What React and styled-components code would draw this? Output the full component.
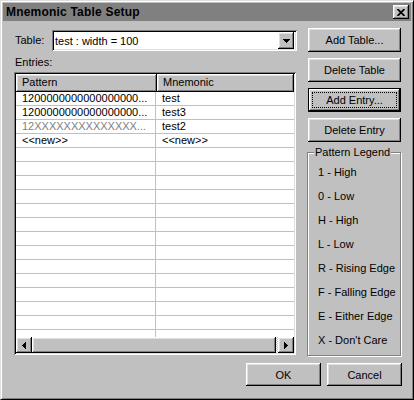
import React from "react";
import styled, { createGlobalStyle, css } from "styled-components";

const GlobalStyle = createGlobalStyle`
  html, body {
    margin: 0;
    padding: 0;
    background: #c0c0c0;
  }
  body {
    font-family: "Liberation Sans", Arial, sans-serif;
    font-size: 11px;
    color: #000;
  }
`;

const raised = css`
  box-shadow: inset -1px -1px #000, inset 1px 1px #fff, inset -2px -2px #808080,
    inset 2px 2px #dfdfdf;
`;

const sunken = css`
  box-shadow: inset 1px 1px #808080, inset -1px -1px #fff, inset 2px 2px #000,
    inset -2px -2px #dfdfdf;
`;

const Window = styled.div`
  box-sizing: border-box;
  width: 414px;
  height: 400px;
  background: #c0c0c0;
  border: 1px solid;
  border-color: #dfdfdf #000 #000 #dfdfdf;
  box-shadow: inset 1px 1px #fff, inset -1px -1px #808080;
  padding: 2px;
  display: flex;
  flex-direction: column;
`;

const TitleBar = styled.div`
  height: 18px;
  background: #808080;
  display: flex;
  align-items: center;
  justify-content: space-between;
  padding: 0 2px 0 3px;
`;

const Title = styled.span`
  font-weight: bold;
  font-size: 12px;
  letter-spacing: 0.2px;
  color: #000;
`;

const CloseButton = styled.div`
  ${raised};
  width: 16px;
  height: 14px;
  background: #c0c0c0;
  display: flex;
  align-items: center;
  justify-content: center;
`;

const Body = styled.div`
  display: flex;
  gap: 10px;
  margin: 7px 0 0 11px;
  height: 328px;
`;

const LeftCol = styled.div`
  width: 283px;
  display: flex;
  flex-direction: column;
`;

const TableRow = styled.div`
  display: flex;
  align-items: center;
  height: 21px;
  margin-top: 2px;
`;

const Label = styled.span`
  display: block;
  line-height: 13px;
  padding-left: 1px;
  width: ${(p) => (p.$w ? `${p.$w}px` : "auto")};
  flex-shrink: 0;
`;

const EntriesLabel = styled(Label)`
  margin-top: 5px;
  margin-bottom: 3px;
`;

const Combo = styled.div`
  ${sunken};
  box-sizing: border-box;
  flex: 1;
  height: 21px;
  background: #fff;
  display: flex;
  align-items: center;
  padding: 2px;
`;

const ComboText = styled.span`
  flex: 1;
  padding-left: 1px;
`;

const DropButton = styled.div`
  ${raised};
  width: 16px;
  height: 17px;
  margin-right: 1px;
  background: #c0c0c0;
  display: flex;
  align-items: center;
  justify-content: center;
`;

const ListView = styled.div`
  ${sunken};
  box-sizing: border-box;
  width: 282px;
  height: 283px;
  padding: 2px;
  background: #fff;
  display: flex;
  flex-direction: column;
`;

const Header = styled.div`
  display: flex;
  height: 18px;
  flex-shrink: 0;
`;

const HeaderCell = styled.div`
  ${raised};
  box-sizing: border-box;
  background: #c0c0c0;
  height: 18px;
  line-height: 17px;
  padding-left: 6px;
  width: ${(p) => (p.$w ? `${p.$w}px` : "auto")};
  flex: ${(p) => (p.$w ? "none" : 1)};
`;

const Rows = styled.div`
  flex: 1;
  overflow: hidden;
`;

const Row = styled.div`
  display: flex;
  box-sizing: border-box;
  height: 14px;
  border-bottom: 1px solid #c0c0c0;
`;

const Cell = styled.div`
  box-sizing: border-box;
  line-height: 13px;
  padding-left: 6px;
  white-space: nowrap;
  overflow: hidden;
  color: ${(p) => (p.$dim ? "#808080" : "#000")};
  width: ${(p) => (p.$w ? `${p.$w}px` : "auto")};
  flex: ${(p) => (p.$w ? "none" : 1)};
  border-right: ${(p) => (p.$w ? "1px solid #c0c0c0" : "none")};
`;

const ScrollBar = styled.div`
  display: flex;
  height: 16px;
  flex-shrink: 0;
`;

const ScrollButton = styled.div`
  ${raised};
  width: 16px;
  height: 16px;
  background: #c0c0c0;
  display: flex;
  align-items: center;
  justify-content: center;
`;

const Track = styled.div`
  flex: 1;
  display: flex;
  background: repeating-conic-gradient(#c0c0c0 0 25%, #fff 0 50%) 0 0 / 2px 2px;
`;

const Thumb = styled.div`
  ${raised};
  width: calc(100% - 2px);
  height: 16px;
  background: #c0c0c0;
`;

const RightCol = styled.div`
  width: 94px;
  display: flex;
  flex-direction: column;
  gap: 6px;
`;

const Button = styled.div`
  ${raised};
  box-sizing: border-box;
  width: ${(p) => p.$w || 93}px;
  height: ${(p) => p.$h || 24}px;
  margin-left: ${(p) => (p.$side ? 1 : 0)}px;
  background: #c0c0c0;
  display: flex;
  align-items: center;
  justify-content: center;
  padding: 3px;
  ${(p) =>
    p.$default &&
    css`
      border: 1px solid #000;
      padding: 3px;
    `}
`;

const FocusRing = styled.span`
  flex: 1;
  align-self: stretch;
  display: flex;
  align-items: center;
  justify-content: center;
  border: 1px dotted #000;
`;

const Group = styled.fieldset`
  box-sizing: border-box;
  margin: -2px 0 0 0;
  min-width: 0;
  width: 94px;
  height: 210px;
  padding: 1px 0 3px 8px;
  border: 1px solid #808080;
  box-shadow: 1px 1px 0 #fff, inset 1px 1px 0 #fff;
`;

const Legend = styled.legend`
  padding: 0 1px;
  margin-left: -2px;
  line-height: 13px;
  background: #c0c0c0;
`;

const LegendItem = styled.div`
  height: 24px;
  line-height: 24px;
  padding-left: 2px;
`;

const Footer = styled.div`
  display: flex;
  justify-content: flex-end;
  gap: 6px;
  padding: 7px 9px 0 0;
`;

const ArrowDown = () => (
  <svg width="7" height="4" viewBox="0 0 7 4" shapeRendering="crispEdges">
    <polygon points="0,0 7,0 3.5,4" fill="#000" />
  </svg>
);

const ArrowLeft = () => (
  <svg width="4" height="7" viewBox="0 0 4 7" shapeRendering="crispEdges">
    <polygon points="4,0 4,7 0,3.5" fill="#000" />
  </svg>
);

const ArrowRight = () => (
  <svg width="4" height="7" viewBox="0 0 4 7" shapeRendering="crispEdges">
    <polygon points="0,0 0,7 4,3.5" fill="#000" />
  </svg>
);

const CloseGlyph = () => (
  <svg width="8" height="7" viewBox="0 0 8 7">
    <path d="M0.5 0 L7.5 7 M7.5 0 L0.5 7" stroke="#000" strokeWidth="1.8" />
  </svg>
);

const entries = [
  { pattern: "12" + "0".repeat(17) + "...", name: "test" },
  { pattern: "12" + "0".repeat(17) + "...", name: "test3" },
  { pattern: "12" + "X".repeat(14) + "...", name: "test2", dim: true },
  { pattern: "<<new>>", name: "<<new>>" },
];

const legend = [
  "1 - High",
  "0 - Low",
  "H - High",
  "L - Low",
  "R - Rising Edge",
  "F - Falling Edge",
  "E - Either Edge",
  "X - Don't Care",
];

const App = () => {
  const blanks = Array.from({ length: 16 });

  return (
    <>
      <GlobalStyle />
      <Window>
        <TitleBar>
          <Title>Mnemonic Table Setup</Title>
          <CloseButton>
            <CloseGlyph />
          </CloseButton>
        </TitleBar>
        <Body>
          <LeftCol>
            <TableRow>
              <Label $w={37}>Table:</Label>
              <Combo>
                <ComboText>test : width = 100</ComboText>
                <DropButton>
                  <ArrowDown />
                </DropButton>
              </Combo>
            </TableRow>
            <EntriesLabel>Entries:</EntriesLabel>
            <ListView>
              <Header>
                <HeaderCell $w={141}>Pattern</HeaderCell>
                <HeaderCell>Mnemonic</HeaderCell>
              </Header>
              <Rows>
                {entries.map((e, i) => (
                  <Row key={i}>
                    <Cell $w={140} $dim={e.dim}>
                      {e.pattern}
                    </Cell>
                    <Cell>{e.name}</Cell>
                  </Row>
                ))}
                {blanks.map((_, i) => (
                  <Row key={`b${i}`}>
                    <Cell $w={140} />
                    <Cell />
                  </Row>
                ))}
              </Rows>
              <ScrollBar>
                <ScrollButton>
                  <ArrowLeft />
                </ScrollButton>
                <Track>
                  <Thumb />
                </Track>
                <ScrollButton>
                  <ArrowRight />
                </ScrollButton>
              </ScrollBar>
            </ListView>
          </LeftCol>
          <RightCol>
            <Button $side>Add Table...</Button>
            <Button $side>Delete Table</Button>
            <Button $side $default>
              <FocusRing>Add Entry...</FocusRing>
            </Button>
            <Button $side>Delete Entry</Button>
            <Group>
              <Legend>Pattern Legend</Legend>
              {legend.map((l) => (
                <LegendItem key={l}>{l}</LegendItem>
              ))}
            </Group>
          </RightCol>
        </Body>
        <Footer>
          <Button $w={75} $h={23}>
            OK
          </Button>
          <Button $w={75} $h={23}>
            Cancel
          </Button>
        </Footer>
      </Window>
    </>
  );
};

export default App;
